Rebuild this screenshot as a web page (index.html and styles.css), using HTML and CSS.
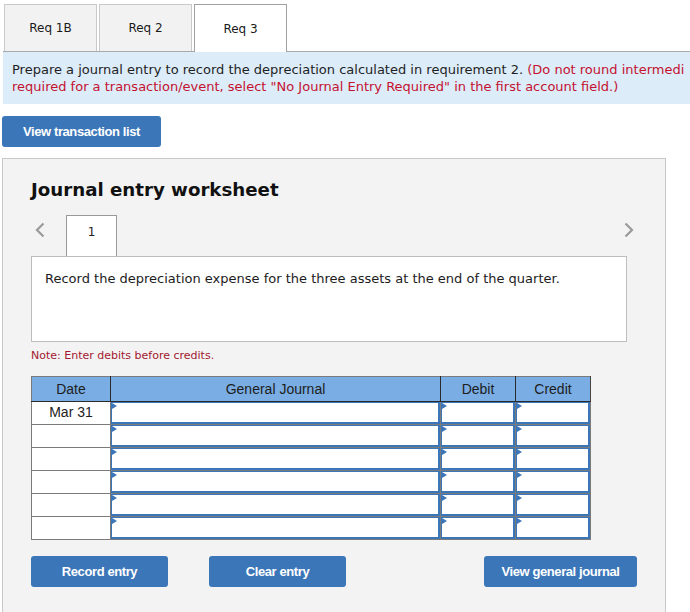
FILE: index.html
```html
<!DOCTYPE html>
<html>
<head>
<meta charset="utf-8">
<link rel="stylesheet" href="styles.css">
</head>
<body>
<div class="tabs">
  <div class="tab">Req 1B</div>
  <div class="tab">Req 2</div>
  <div class="tab active">Req 3</div>
</div>
<div class="instructions">
  <div class="line">Prepare a journal entry to record the depreciation calculated in requirement 2. <span class="red">(Do not round intermedi</span></div>
  <div class="line red">required for a transaction/event, select "No Journal Entry Required" in the first account field.)</div>
</div>
<div class="toolbar">
  <button class="btn btn-list">View transaction list</button>
</div>
<div class="panel">
  <h2 class="title">Journal entry worksheet</h2>
  <div class="nav">
    <span class="arrow left"><svg width="10" height="16" viewBox="0 0 10 16"><path d="M8.5 1.5 L2 8 L8.5 14.5" fill="none" stroke="#9a9a9a" stroke-width="2.2"/></svg></span>
    <div class="num-tab">1</div>
    <span class="arrow right"><svg width="10" height="16" viewBox="0 0 10 16"><path d="M1.5 1.5 L8 8 L1.5 14.5" fill="none" stroke="#9a9a9a" stroke-width="2.2"/></svg></span>
  </div>
  <div class="desc">Record the depreciation expense for the three assets at the end of the quarter.</div>
  <div class="note">Note: Enter debits before credits.</div>
  <table class="journal">
    <thead>
      <tr><th class="c-date">Date</th><th class="c-gj">General Journal</th><th class="c-dr">Debit</th><th class="c-cr">Credit</th></tr>
    </thead>
    <tbody>
      <tr><td class="date">Mar 31</td><td class="in"><div class="field"></div></td><td class="in"><div class="field"></div></td><td class="in"><div class="field"></div></td></tr>
      <tr><td class="date"></td><td class="in"><div class="field"></div></td><td class="in"><div class="field"></div></td><td class="in"><div class="field"></div></td></tr>
      <tr><td class="date"></td><td class="in"><div class="field"></div></td><td class="in"><div class="field"></div></td><td class="in"><div class="field"></div></td></tr>
      <tr><td class="date"></td><td class="in"><div class="field"></div></td><td class="in"><div class="field"></div></td><td class="in"><div class="field"></div></td></tr>
      <tr><td class="date"></td><td class="in"><div class="field"></div></td><td class="in"><div class="field"></div></td><td class="in"><div class="field"></div></td></tr>
      <tr><td class="date"></td><td class="in"><div class="field"></div></td><td class="in"><div class="field"></div></td><td class="in"><div class="field"></div></td></tr>
    </tbody>
  </table>
  <div class="actions">
    <button class="btn btn-rec">Record entry</button>
    <button class="btn btn-clr">Clear entry</button>
    <button class="btn btn-view">View general journal</button>
  </div>
</div>
</body>
</html>
```
FILE: styles.css
```css
html, body { margin: 0; padding: 0; }
body {
  width: 690px;
  height: 612px;
  overflow: hidden;
  background: #fff;
  font-family: "DejaVu Sans", Verdana, sans-serif;
  color: #222;
}
.tabs {
  display: flex;
  padding: 4px 0 0 1px;
  margin-left: 3px;
  border-bottom: 1px solid #a9a9a9;
  height: 47px;
  box-sizing: content-box;
}
.tab {
  width: 91px;
  height: 46px;
  margin-right: 2px;
  background: #f2f2f2;
  border: 1px solid #c9c9c9;
  border-bottom: none;
  display: flex;
  align-items: center;
  justify-content: center;
  font-size: 12px;
  color: #1a1a1a;
}
.tab.active {
  background: #fff;
  border-color: #a0a0a0;
  height: 47px;
  position: relative;
  z-index: 1;
}
.instructions {
  margin-left: 3px;
  background: #dcecf9;
  padding: 9px 0 9px 9px;
  height: 34px;
  font-size: 13px;
  line-height: 17px;
  white-space: nowrap;
  overflow: hidden;
  color: #1f1f1f;
}
.red { color: #c41230; }
.toolbar {
  padding: 12px 0 0 2px;
  height: 31px;
}
.btn {
  background: #3b76b8;
  color: #fff;
  border: none;
  border-radius: 3px;
  height: 31px;
  font-family: "Liberation Sans", Arial, sans-serif;
  font-weight: bold;
  font-size: 13px;
  letter-spacing: -0.4px;
  padding: 0;
  cursor: pointer;
}
.btn-list { width: 159px; }
.panel {
  margin: 11px 0 0 2px;
  width: 664px;
  height: 460px;
  background: #f3f3f3;
  border: 1px solid #c9c9c9;
  padding: 0 28px;
  box-sizing: border-box;
}
.title {
  margin: 20px 0 0 0;
  font-size: 18.2px;
  font-weight: bold;
  line-height: 22px;
  color: #111;
}
.nav {
  display: flex;
  align-items: flex-start;
  margin-top: 14px;
  height: 41px;
  position: relative;
}
.arrow { display: block; height: 16px; }
.arrow.left { margin: 7px 0 0 4px; }
.arrow.right { margin: 7px 0 0 auto; margin-right: 3px; }
.num-tab {
  margin-left: 21px;
  width: 51px;
  height: 41px;
  background: #fff;
  border: 1px solid #999;
  border-bottom: none;
  box-sizing: border-box;
  font-size: 12px;
  text-align: center;
  padding-top: 9px;
  position: relative;
  z-index: 1;
  margin-bottom: -1px;
}
.desc {
  width: 596px;
  height: 86px;
  box-sizing: border-box;
  background: #fff;
  border: 1px solid #bdbdbd;
  padding: 14px 0 0 13px;
  font-size: 13px;
  color: #1c1c1c;
}
.note {
  margin-top: 7px;
  font-size: 11px;
  color: #a3182f;
  height: 14px;
  line-height: 14px;
}
.journal {
  margin-top: 13px;
  border-collapse: collapse;
  width: 560px;
  font-family: "Liberation Sans", Arial, sans-serif;
  font-size: 14px;
  table-layout: fixed;
}
.journal th {
  background: #7aade3;
  color: #1d1d1d;
  font-weight: normal;
  height: 24px;
  padding: 0;
  border: 1px solid #2a2a2a;
  border-top-color: #7b7b7b;
  font-size: 14px;
}
.journal th.c-date { border-left-color: #7b7b7b; }
.journal th.c-cr { border-right-color: #444; }
.c-date { width: 78px; }
.c-gj { width: 329px; }
.c-dr { width: 74px; }
.c-cr { width: 74px; }
.journal td {
  height: 22px;
  padding: 0;
  border: 1px solid #7b7b7b;
  background: #fff;
}
.journal td.date {
  text-align: center;
  vertical-align: top;
  padding-top: 2px;
  height: 20px;
  color: #222;
}
.journal td.in { vertical-align: top; }
.field {
  height: 22px;
  box-sizing: border-box;
  border-top: 1px solid #3b76b8;
  border-left: 1px solid #3b76b8;
  border-right: 2px solid #3b76b8;
  border-bottom: 2px solid #3b76b8;
  position: relative;
  background: #fff;
}
.field::before {
  content: "";
  position: absolute;
  left: 0;
  top: 0;
  border-left: 5px solid #3b76b8;
  border-top: 3.5px solid transparent;
  border-bottom: 3.5px solid transparent;
}
.actions {
  display: flex;
  margin-top: 16px;
}
.btn-rec { width: 137px; }
.btn-clr { width: 137px; margin-left: 41px; }
.btn-view { width: 153px; margin-left: auto; }
```
